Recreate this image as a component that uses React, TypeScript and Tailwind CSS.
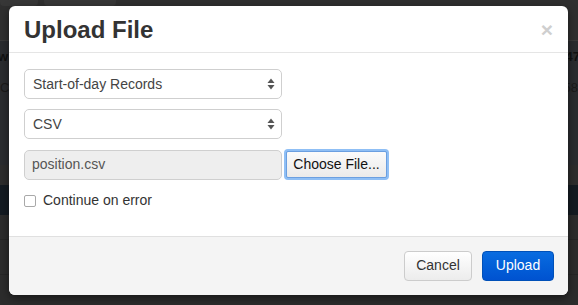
import React from 'react';

const SelectArrows = () => (
  <svg width="8" height="12" viewBox="0 0 8 12" className="shrink-0">
    <path d="M4 0.5 L7.5 5 L0.5 5 Z" fill="#555" />
    <path d="M4 11.5 L7.5 7 L0.5 7 Z" fill="#555" />
  </svg>
);

const FakeSelect: React.FC<{ value: string }> = ({ value }) => (
  <div className="w-[258px] h-[30px] rounded-[5px] border border-[#cfcfcf] bg-white flex items-center justify-between pl-[8px] pr-[6px] text-[14px] text-[#444]">
    <span>{value}</span>
    <SelectArrows />
  </div>
);

const Background = () => (
  <div className="w-full h-full flex flex-col bg-[#2f2f2f]">
    <div className="h-[40px] flex gap-[6px]">
      <div className="w-[38px] h-[6px] rounded-b-[4px] bg-[#373737]" />
      <div className="w-[72px] h-[6px] rounded-b-[4px] bg-[#373737]" />
    </div>
    <div className="h-[125px] bg-[#2a2c2f] border-t border-[#3a3a3a] flex flex-col text-[13px] font-bold text-[#111]">
      <div className="h-[32px] flex items-center justify-between">
        <span className="-ml-[2px]">w c</span>
        <span className="-mr-[2px]">47</span>
      </div>
      <div className="h-[30px] flex items-center justify-between font-normal text-[#1a1a1a]">
        <span>C</span>
        <span>58</span>
      </div>
    </div>
    <div className="h-[20px] bg-[#2d2d2d]" />
    <div className="h-[30px] bg-[#141b22]" />
    <div className="h-[25px] bg-[#2c2c2c] border-b border-[#262626]" />
    <div className="h-[35px] bg-[#2c2c2c] border-b border-[#262626]" />
    <div className="flex-1 bg-[#2c2c2c]" />
  </div>
);

export default function App() {
  return (
    <div className="w-[578px] h-[305px] relative overflow-hidden" style={{ fontFamily: '"Liberation Sans", Arial, sans-serif' }}>
      <Background />
      <div className="absolute inset-0 pl-[9px] pt-[6px]">
        <div className="w-[559px] h-[289px] rounded-[6px] bg-white flex flex-col overflow-hidden shadow-[0_3px_9px_rgba(0,0,0,0.5)]">
          <div className="h-[47px] shrink-0 border-b border-[#e5e5e5] flex items-center justify-between pl-[15px] pr-[15px]">
            <h1 className="text-[24px] font-bold text-[#333] leading-none pt-[2px]">Upload File</h1>
            <span className="text-[21px] font-bold text-[#cfcfcf] leading-none pt-[1px]">×</span>
          </div>
          <div className="flex-1 flex flex-col px-[15px] pt-[16px] gap-[10px]">
            <FakeSelect value="Start-of-day Records" />
            <FakeSelect value="CSV" />
            <div className="flex items-center gap-[2px]">
              <div className="w-[258px] h-[30px] rounded-[5px] border border-[#cfcfcf] bg-[#eeeeee] flex items-center pl-[7px] text-[14px] text-[#555]">
                position.csv
              </div>
              <div className="h-[31px] rounded-[4px] p-[2px] bg-[#8fbff5]">
                <div className="h-full w-[101px] rounded-[2px] border border-[#6b9fe0] bg-gradient-to-b from-[#fbfbfb] to-[#eaeaea] flex items-center justify-center text-[14px] text-[#111]">
                  Choose File...
                </div>
              </div>
            </div>
            <label className="flex items-center gap-[7px] text-[14px] text-[#333]">
              <span className="w-[12px] h-[12px] rounded-[2px] border border-[#a9a9a9] bg-white" />
              Continue on error
            </label>
          </div>
          <div className="h-[59px] shrink-0 border-t border-[#e0e0e0] bg-[#f4f4f4] flex items-center justify-end gap-[10px] pr-[14px] pb-[1px]">
            <button className="w-[68px] h-[30px] rounded-[4px] border border-[#cccccc] bg-gradient-to-b from-white to-[#ececec] text-[14px] text-[#333]">
              Cancel
            </button>
            <button className="w-[72px] h-[30px] rounded-[4px] border border-[#0050b8] bg-gradient-to-b from-[#0a6ce0] to-[#0052d0] text-[14px] text-white">
              Upload
            </button>
          </div>
        </div>
      </div>
    </div>
  );
}
